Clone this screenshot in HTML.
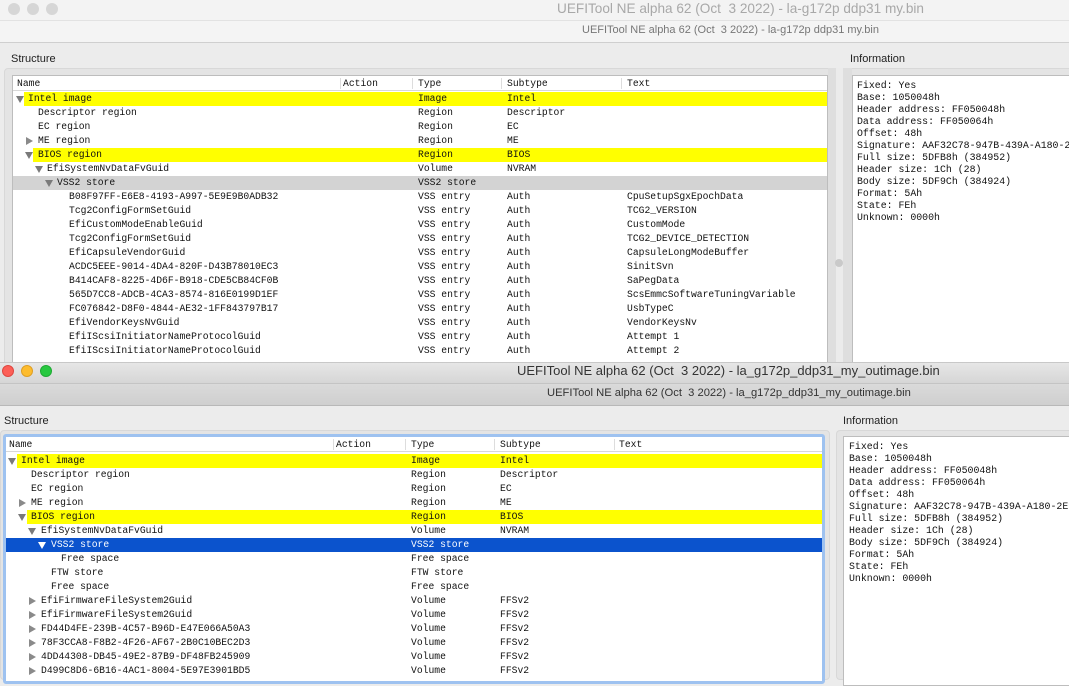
<!DOCTYPE html>
<html><head><meta charset="utf-8"><style>
*{margin:0;padding:0;box-sizing:border-box}
body{width:1069px;height:673px;overflow:hidden;background:#ececec;position:relative;font-family:"Liberation Sans",sans-serif}
.a{position:absolute}
.m{font-family:"Liberation Mono",monospace;font-size:9.7px;color:#111;white-space:pre}
.r{position:absolute;height:14px;line-height:14px;left:0;right:0}
.r span{position:absolute;top:0}
.tri{position:absolute;width:0;height:0}
.dn{border-left:4.5px solid transparent;border-right:4.5px solid transparent;border-top:7px solid #7a7a7a;top:4px}
.rt{border-top:4.5px solid transparent;border-bottom:4.5px solid transparent;border-left:7px solid #8a8a8a;top:2.5px}
.y{background:#ffff00}
.lbl{font-size:11px;color:#222}
.hdr{position:absolute;height:15px;line-height:15px;background:#fff;border-bottom:1px solid #d8d8d8;font-family:"Liberation Mono",monospace;font-size:9.7px;color:#111}
.hdr span{position:absolute;top:0}
.hdr i{position:absolute;top:2px;width:1px;height:11px;background:#ddd}
.info{white-space:nowrap;overflow:hidden;font-family:"Liberation Mono",monospace;font-size:9.9px;color:#111}
.info div{height:12px;line-height:12px}
.dot{width:8px;height:8px;border-radius:50%;background:#c9c9c9;position:absolute;top:259px}
</style></head><body>

<!-- WINDOW 1 -->
<div class="a" style="left:0;top:0;width:1069px;height:20px;background:#f3f3f3"></div>
<div class="a" style="left:8px;top:3px;width:12px;height:12px;border-radius:50%;background:#d6d6d6"></div>
<div class="a" style="left:27px;top:3px;width:12px;height:12px;border-radius:50%;background:#d6d6d6"></div>
<div class="a" style="left:46px;top:3px;width:12px;height:12px;border-radius:50%;background:#d6d6d6"></div>
<div class="a" style="left:557px;top:1px;font-size:13.6px;color:#a8a8a8;white-space:pre">UEFITool NE alpha 62 (Oct  3 2022) - la-g172p ddp31 my.bin</div>
<div class="a" style="left:0;top:20px;width:1069px;height:23px;background:#f4f4f4;border-top:1px solid #e2e2e2;border-bottom:1px solid #cfcfcf"></div>
<div class="a" style="left:582px;top:24px;font-size:11px;color:#777;white-space:pre">UEFITool NE alpha 62 (Oct  3 2022) - la-g172p ddp31 my.bin</div>
<div class="a lbl" style="left:11px;top:53px">Structure</div>
<div class="a lbl" style="left:850px;top:53px">Information</div>
<div class="a" style="left:4px;top:68px;width:833px;height:300px;background:#e4e4e4;border:1px solid #d8d8d8;border-radius:4px"></div>
<div class="a" style="left:845px;top:68px;width:224px;height:300px;background:#e4e4e4;border:1px solid #d8d8d8;border-right:none;border-radius:4px 0 0 4px"></div>
<div class="a" style="left:828px;top:68px;width:24px;height:300px;background:#dedede"></div>
<div class="a" style="left:836px;top:68px;width:7px;height:300px;background:#ebebeb"></div>
<div class="dot" style="left:835px"></div>
<div class="a m" style="left:12px;top:75px;width:816px;height:290px;background:#fff;border:1px solid #bdbdbd;overflow:hidden">
 <div class="hdr" style="left:0;top:0;width:816px"><span style="left:4px">Name</span><i style="left:327px"></i><span style="left:330px">Action</span><i style="left:399px"></i><span style="left:405px">Type</span><i style="left:488px"></i><span style="left:494px">Subtype</span><i style="left:608px"></i><span style="left:614px">Text</span></div>
 <div style="position:absolute;left:0;top:16px;width:816px">
  <div class="r" style="top:0"><div class="a y" style="left:11px;right:0;top:0;height:14px"></div><i class="tri dn" style="left:3px"></i><span style="left:15px">Intel image</span><span style="left:405px">Image</span><span style="left:494px">Intel</span></div>
  <div class="r" style="top:14px"><span style="left:25px">Descriptor region</span><span style="left:405px">Region</span><span style="left:494px">Descriptor</span></div>
  <div class="r" style="top:28px"><span style="left:25px">EC region</span><span style="left:405px">Region</span><span style="left:494px">EC</span></div>
  <div class="r" style="top:42px"><i class="tri rt" style="left:13px"></i><span style="left:25px">ME region</span><span style="left:405px">Region</span><span style="left:494px">ME</span></div>
  <div class="r" style="top:56px"><div class="a y" style="left:20px;right:0;top:0;height:14px"></div><i class="tri dn" style="left:12px"></i><span style="left:25px">BIOS region</span><span style="left:405px">Region</span><span style="left:494px">BIOS</span></div>
  <div class="r" style="top:70px"><i class="tri dn" style="left:22px"></i><span style="left:34px">EfiSystemNvDataFvGuid</span><span style="left:405px">Volume</span><span style="left:494px">NVRAM</span></div>
  <div class="r" style="top:84px;background:#d3d3d3"><i class="tri dn" style="left:32px"></i><span style="left:44px">VSS2 store</span><span style="left:405px">VSS2 store</span></div>
  <div class="r" style="top:98px"><span style="left:56px">B08F97FF-E6E8-4193-A997-5E9E9B0ADB32</span><span style="left:405px">VSS entry</span><span style="left:494px">Auth</span><span style="left:614px">CpuSetupSgxEpochData</span></div>
  <div class="r" style="top:112px"><span style="left:56px">Tcg2ConfigFormSetGuid</span><span style="left:405px">VSS entry</span><span style="left:494px">Auth</span><span style="left:614px">TCG2_VERSION</span></div>
  <div class="r" style="top:126px"><span style="left:56px">EfiCustomModeEnableGuid</span><span style="left:405px">VSS entry</span><span style="left:494px">Auth</span><span style="left:614px">CustomMode</span></div>
  <div class="r" style="top:140px"><span style="left:56px">Tcg2ConfigFormSetGuid</span><span style="left:405px">VSS entry</span><span style="left:494px">Auth</span><span style="left:614px">TCG2_DEVICE_DETECTION</span></div>
  <div class="r" style="top:154px"><span style="left:56px">EfiCapsuleVendorGuid</span><span style="left:405px">VSS entry</span><span style="left:494px">Auth</span><span style="left:614px">CapsuleLongModeBuffer</span></div>
  <div class="r" style="top:168px"><span style="left:56px">ACDC5EEE-9014-4DA4-820F-D43B78010EC3</span><span style="left:405px">VSS entry</span><span style="left:494px">Auth</span><span style="left:614px">SinitSvn</span></div>
  <div class="r" style="top:182px"><span style="left:56px">B414CAF8-8225-4D6F-B918-CDE5CB84CF0B</span><span style="left:405px">VSS entry</span><span style="left:494px">Auth</span><span style="left:614px">SaPegData</span></div>
  <div class="r" style="top:196px"><span style="left:56px">565D7CC8-ADCB-4CA3-8574-816E0199D1EF</span><span style="left:405px">VSS entry</span><span style="left:494px">Auth</span><span style="left:614px">ScsEmmcSoftwareTuningVariable</span></div>
  <div class="r" style="top:210px"><span style="left:56px">FC076842-D8F0-4844-AE32-1FF843797B17</span><span style="left:405px">VSS entry</span><span style="left:494px">Auth</span><span style="left:614px">UsbTypeC</span></div>
  <div class="r" style="top:224px"><span style="left:56px">EfiVendorKeysNvGuid</span><span style="left:405px">VSS entry</span><span style="left:494px">Auth</span><span style="left:614px">VendorKeysNv</span></div>
  <div class="r" style="top:238px"><span style="left:56px">EfiIScsiInitiatorNameProtocolGuid</span><span style="left:405px">VSS entry</span><span style="left:494px">Auth</span><span style="left:614px">Attempt 1</span></div>
  <div class="r" style="top:252px"><span style="left:56px">EfiIScsiInitiatorNameProtocolGuid</span><span style="left:405px">VSS entry</span><span style="left:494px">Auth</span><span style="left:614px">Attempt 2</span></div>
 </div>
</div>
<div class="a info" style="left:852px;top:75px;width:217px;height:290px;background:#fff;border:1px solid #bdbdbd;border-right:none;padding:4px 0 0 4px"><div>Fixed: Yes</div><div>Base: 1050048h</div><div>Header address: FF050048h</div><div>Data address: FF050064h</div><div>Offset: 48h</div><div>Signature: AAF32C78-947B-439A-A180-2E144EC37792</div><div>Full size: 5DFB8h (384952)</div><div>Header size: 1Ch (28)</div><div>Body size: 5DF9Ch (384924)</div><div>Format: 5Ah</div><div>State: FEh</div><div>Unknown: 0000h</div></div>

<!-- WINDOW 2 -->
<div class="a" style="left:0;top:362px;width:1069px;height:311px;background:#ececec"></div>
<div class="a" style="left:0;top:362px;width:1069px;height:21px;background:linear-gradient(#e6e6e6,#d6d6d6);border-top:1px solid #c8c8c8"></div>
<div class="a" style="left:2px;top:365px;width:12px;height:12px;border-radius:50%;background:#fc5f57;border:0.5px solid #de4740"></div>
<div class="a" style="left:21px;top:365px;width:12px;height:12px;border-radius:50%;background:#fdbc2e;border:0.5px solid #de9f25"></div>
<div class="a" style="left:40px;top:365px;width:12px;height:12px;border-radius:50%;background:#28c840;border:0.5px solid #1faa34"></div>
<div class="a" style="left:517px;top:363px;font-size:13px;color:#333;white-space:pre">UEFITool NE alpha 62 (Oct  3 2022) - la_g172p_ddp31_my_outimage.bin</div>
<div class="a" style="left:0;top:383px;width:1069px;height:23px;background:linear-gradient(#dadada,#cfcfcf);border-top:1px solid #c4c4c4;border-bottom:1px solid #b8b8b8"></div>
<div class="a" style="left:547px;top:387px;font-size:11.2px;color:#333;white-space:pre">UEFITool NE alpha 62 (Oct  3 2022) - la_g172p_ddp31_my_outimage.bin</div>
<div class="a lbl" style="left:4px;top:415px">Structure</div>
<div class="a lbl" style="left:843px;top:415px">Information</div>
<div class="a" style="left:0;top:430px;width:830px;height:250px;background:#e4e4e4;border:1px solid #d8d8d8;border-radius:4px"></div>
<div class="a" style="left:836px;top:430px;width:233px;height:250px;background:#e4e4e4;border:1px solid #d8d8d8;border-right:none;border-radius:4px 0 0 4px"></div>
<div class="a m" style="left:3px;top:434px;width:822px;height:250px;background:#fff;border:3px solid #9ec2f0;border-radius:3px;overflow:hidden">
 <div class="hdr" style="left:0;top:0;width:816px"><span style="left:3px">Name</span><i style="left:327px"></i><span style="left:330px">Action</span><i style="left:399px"></i><span style="left:405px">Type</span><i style="left:488px"></i><span style="left:494px">Subtype</span><i style="left:608px"></i><span style="left:613px">Text</span></div>
 <div style="position:absolute;left:0;top:17px;width:816px">
  <div class="r" style="top:0"><div class="a y" style="left:11px;right:0;top:0;height:14px"></div><i class="tri dn" style="left:2px"></i><span style="left:15px">Intel image</span><span style="left:405px">Image</span><span style="left:494px">Intel</span></div>
  <div class="r" style="top:14px"><span style="left:25px">Descriptor region</span><span style="left:405px">Region</span><span style="left:494px">Descriptor</span></div>
  <div class="r" style="top:28px"><span style="left:25px">EC region</span><span style="left:405px">Region</span><span style="left:494px">EC</span></div>
  <div class="r" style="top:42px"><i class="tri rt" style="left:13px"></i><span style="left:25px">ME region</span><span style="left:405px">Region</span><span style="left:494px">ME</span></div>
  <div class="r" style="top:56px"><div class="a y" style="left:21px;right:0;top:0;height:14px"></div><i class="tri dn" style="left:12px"></i><span style="left:25px">BIOS region</span><span style="left:405px">Region</span><span style="left:494px">BIOS</span></div>
  <div class="r" style="top:70px"><i class="tri dn" style="left:22px"></i><span style="left:35px">EfiSystemNvDataFvGuid</span><span style="left:405px">Volume</span><span style="left:494px">NVRAM</span></div>
  <div class="r" style="top:84px;background:#0b53cd;color:#fff"><i class="tri dn" style="left:32px;border-top-color:#fff"></i><span style="left:45px">VSS2 store</span><span style="left:405px">VSS2 store</span></div>
  <div class="r" style="top:98px"><span style="left:55px">Free space</span><span style="left:405px">Free space</span></div>
  <div class="r" style="top:112px"><span style="left:45px">FTW store</span><span style="left:405px">FTW store</span></div>
  <div class="r" style="top:126px"><span style="left:45px">Free space</span><span style="left:405px">Free space</span></div>
  <div class="r" style="top:140px"><i class="tri rt" style="left:23px"></i><span style="left:35px">EfiFirmwareFileSystem2Guid</span><span style="left:405px">Volume</span><span style="left:494px">FFSv2</span></div>
  <div class="r" style="top:154px"><i class="tri rt" style="left:23px"></i><span style="left:35px">EfiFirmwareFileSystem2Guid</span><span style="left:405px">Volume</span><span style="left:494px">FFSv2</span></div>
  <div class="r" style="top:168px"><i class="tri rt" style="left:23px"></i><span style="left:35px">FD44D4FE-239B-4C57-B96D-E47E066A50A3</span><span style="left:405px">Volume</span><span style="left:494px">FFSv2</span></div>
  <div class="r" style="top:182px"><i class="tri rt" style="left:23px"></i><span style="left:35px">78F3CCA8-F8B2-4F26-AF67-2B0C10BEC2D3</span><span style="left:405px">Volume</span><span style="left:494px">FFSv2</span></div>
  <div class="r" style="top:196px"><i class="tri rt" style="left:23px"></i><span style="left:35px">4DD44308-DB45-49E2-87B9-DF48FB245909</span><span style="left:405px">Volume</span><span style="left:494px">FFSv2</span></div>
  <div class="r" style="top:210px"><i class="tri rt" style="left:23px"></i><span style="left:35px">D499C8D6-6B16-4AC1-8004-5E97E3901BD5</span><span style="left:405px">Volume</span><span style="left:494px">FFSv2</span></div>
 </div>
</div>
<div class="a info" style="left:843px;top:436px;width:226px;height:250px;background:#fff;border:1px solid #bdbdbd;border-right:none;padding:4px 0 0 5px"><div>Fixed: Yes</div><div>Base: 1050048h</div><div>Header address: FF050048h</div><div>Data address: FF050064h</div><div>Offset: 48h</div><div>Signature: AAF32C78-947B-439A-A180-2E144EC37792</div><div>Full size: 5DFB8h (384952)</div><div>Header size: 1Ch (28)</div><div>Body size: 5DF9Ch (384924)</div><div>Format: 5Ah</div><div>State: FEh</div><div>Unknown: 0000h</div></div>
</body></html>
